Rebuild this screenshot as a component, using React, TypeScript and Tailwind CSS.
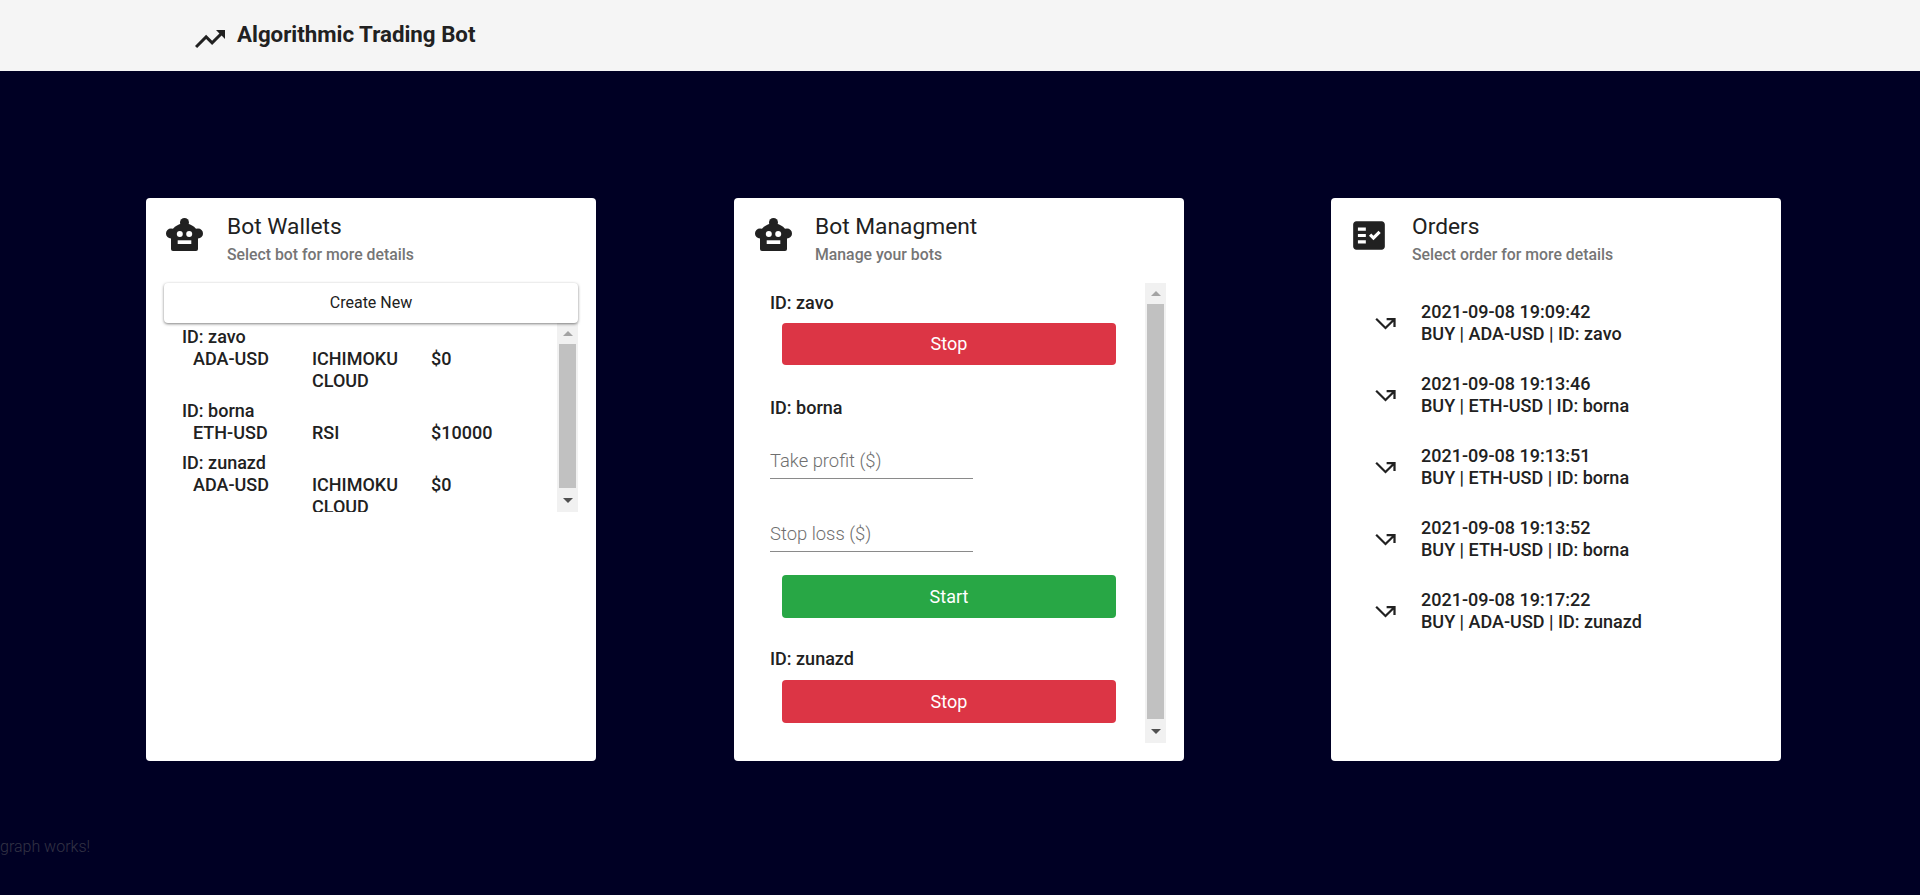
import React from "react";
import { MdFactCheck, MdCallMissedOutgoing, MdTrendingUp } from "react-icons/md";

function Robot() {
  return (
    <svg viewBox="0 0 37 33" className="w-[37px] h-[33px] text-[#212121]" fill="currentColor">
      <circle cx="18.500" cy="4.500" r="4.500" />
      <ellipse cx="18.500" cy="17" rx="13.500" ry="11.500" />
      <circle cx="5" cy="15.500" r="5" />
      <circle cx="32" cy="15.500" r="5" />
      <rect x="5" y="14" width="27" height="19" rx="2" />
      <circle cx="13.800" cy="16" r="3" fill="#fff" />
      <circle cx="23.200" cy="16" r="3" fill="#fff" />
      <rect x="11.700" y="22.300" width="13.600" height="3.700" fill="#fff" />
    </svg>
  );
}

function CardHead({ icon, title, sub, left = "pl-[19px]", gap = "gap-[24px]" }: { icon: React.ReactNode; title: string; sub: string; left?: string; gap?: string }) {
  return (
    <div className={`flex items-start pt-[19px] ${left} ${gap}`}>
      <div className="w-[38px] flex justify-center pt-[1px]">{icon}</div>
      <div>
        <div className="text-[22.75px] leading-[28px] text-[#212121] -mt-[4px]">{title}</div>
        <div className="text-[15.800px] leading-[20px] font-medium text-[#757575] mt-[4px]">{sub}</div>
      </div>
    </div>
  );
}

function Scrollbar() {
  return (
    <div className="w-[21px] shrink-0 bg-[#f1f1f1] flex flex-col items-center">
      <div className="h-[21px] w-full flex items-center justify-center">
        <div className="w-0 h-0 border-x-[5px] border-x-transparent border-b-[5px] border-b-[#a3a3a3]" />
      </div>
      <div className="flex-1 w-[17px] bg-[#c1c1c1]" />
      <div className="h-[24px] w-full flex items-center justify-center">
        <div className="w-0 h-0 border-x-[5px] border-x-transparent border-t-[5px] border-t-[#505050]" />
      </div>
    </div>
  );
}

function WalletRow({ id, pair, strat, amt }: { id: string; pair: string; strat: string; amt: string }) {
  return (
    <div className="mb-[8px]">
      <div className="pl-[18px]">ID: {id}</div>
      <div className="flex pl-[29px]">
        <div className="w-[119px]">{pair}</div>
        <div className="w-[119px] pr-[20px]">{strat}</div>
        <div>{amt}</div>
      </div>
    </div>
  );
}

function Btn({ label, color }: { label: string; color: string }) {
  return (
    <div className={`ml-[12px] w-[334px] h-[42px] rounded-[4px] flex items-center justify-center text-white text-[18px] font-normal ${color}`}>
      {label}
    </div>
  );
}

function Field({ label }: { label: string }) {
  return (
    <div className="w-[203px] h-[31px] border-b border-[#8a8a8a] text-[18.400px] leading-[26px] font-light text-[#6f6f6f]">
      {label}
    </div>
  );
}

const orders = [
  ["2021-09-08 19:09:42", "BUY | ADA-USD | ID: zavo"],
  ["2021-09-08 19:13:46", "BUY | ETH-USD | ID: borna"],
  ["2021-09-08 19:13:51", "BUY | ETH-USD | ID: borna"],
  ["2021-09-08 19:13:52", "BUY | ETH-USD | ID: borna"],
  ["2021-09-08 19:17:22", "BUY | ADA-USD | ID: zunazd"],
];

export default function App() {
  return (
    <div className="h-[895px] overflow-hidden bg-[#000024] flex flex-col text-[#212121]" style={{ fontFamily: "Roboto, sans-serif" }}>
      <header className="h-[71px] bg-[#f5f5f5] shrink-0 flex items-start pl-[192px]">
        <MdTrendingUp className="w-[36px] h-[36px] mt-[21px] text-[#212121]" />
        <div className="ml-[9px] mt-[18px] text-[22.300px] leading-[32px] font-bold">Algorithmic Trading Bot</div>
      </header>

      <main className="flex items-start pt-[127px] pl-[146px] flex-1">
        <section className="w-[450px] h-[563px] bg-white rounded-[4px]">
          <CardHead icon={<Robot />} title="Bot Wallets" sub="Select bot for more details" />
          <div className="mx-[18px] mt-[18px]">
            <div className="h-[40px] rounded-[4px] bg-white shadow-[0_1px_3px_rgba(0,0,0,0.5)] flex items-center justify-center text-[16px] relative z-10">
              Create New
            </div>
            <div className="h-[189px] flex overflow-hidden">
              <div className="flex-1 overflow-hidden text-[18px] leading-[22px] font-medium pt-[3px]">
                <WalletRow id="zavo" pair="ADA-USD" strat="ICHIMOKU CLOUD" amt="$0" />
                <WalletRow id="borna" pair="ETH-USD" strat="RSI" amt="$10000" />
                <WalletRow id="zunazd" pair="ADA-USD" strat="ICHIMOKU CLOUD" amt="$0" />
              </div>
              <Scrollbar />
            </div>
          </div>
        </section>

        <section className="ml-[138px] w-[450px] h-[563px] bg-white rounded-[4px]">
          <CardHead icon={<Robot />} title="Bot Managment" sub="Manage your bots" left="pl-[20px]" gap="gap-[23px]" />
          <div className="mt-[18px] ml-[36px] mr-[18px] h-[460px] flex">
            <div className="flex-1 text-[18px] leading-[22px] font-medium">
              <div className="pt-[9px]">ID: zavo</div>
              <div className="mt-[9px]"><Btn label="Stop" color="bg-[#dc3545]" /></div>
              <div className="mt-[32px]">ID: borna</div>
              <div className="mt-[29px]"><Field label="Take profit ($)" /></div>
              <div className="mt-[42px]"><Field label="Stop loss ($)" /></div>
              <div className="mt-[23px]"><Btn label="Start" color="bg-[#28a745] !h-[43px]" /></div>
              <div className="mt-[30px]">ID: zunazd</div>
              <div className="mt-[10px]"><Btn label="Stop" color="bg-[#dc3545] !h-[43px]" /></div>
            </div>
            <Scrollbar />
          </div>
        </section>

        <section className="ml-[147px] w-[450px] h-[563px] bg-white rounded-[4px]">
          <CardHead icon={<MdFactCheck className="w-[41px] h-[41px] text-[#212121] -mt-[3px]" />} title="Orders" sub="Select order for more details" />
          <div className="mt-[22px] text-[18px] leading-[22px] font-medium">
            {orders.map(([d, t]) => (
              <div key={d} className="flex items-center h-[72px] pl-[41px]">
                <MdCallMissedOutgoing className="w-[27px] h-[27px] text-[#212121]" />
                <div className="ml-[22px]">
                  <div>{d}</div>
                  <div>{t}</div>
                </div>
              </div>
            ))}
          </div>
        </section>
      </main>

      <div className="h-[60px] shrink-0 text-[16px] leading-[24px] font-light text-[#333344]">graph works!</div>
    </div>
  );
}
